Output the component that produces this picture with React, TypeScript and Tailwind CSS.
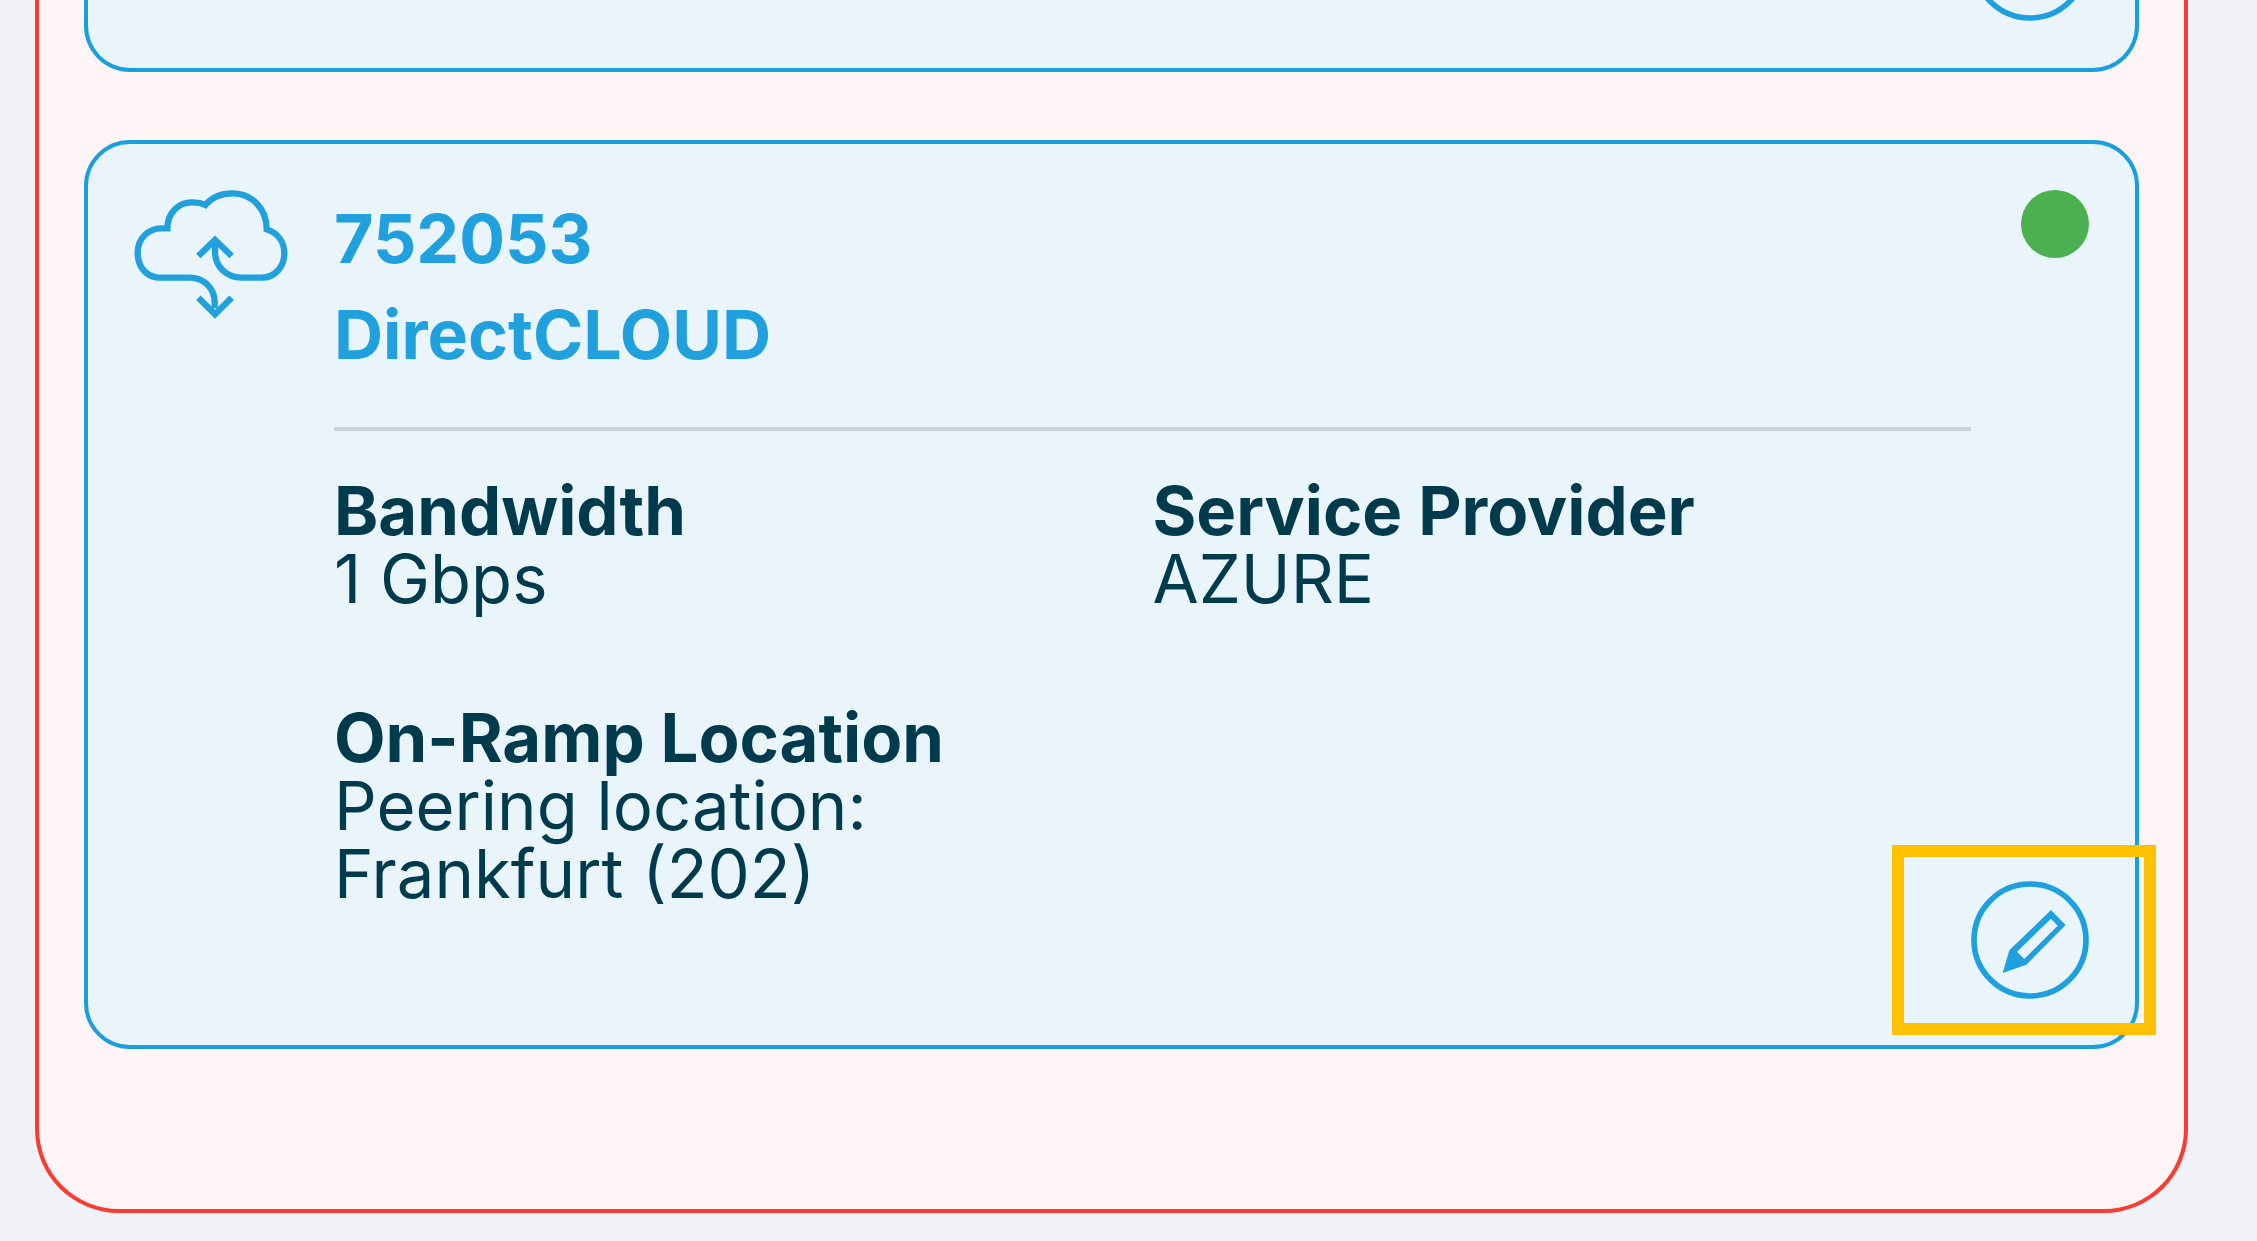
type Detail = {
  label: string;
  lines: string[];
};

const details: Detail[] = [
  { label: "Bandwidth", lines: ["1 Gbps"] },
  { label: "Service Provider", lines: ["AZURE"] },
  { label: "On-Ramp Location", lines: ["Peering location:", "Frankfurt (202)"] },
];

function CloudIcon() {
  return (
    <svg
      viewBox="42 60 462 387"
      className="w-[154px] h-[129px] shrink-0"
      fill="none"
      stroke="currentColor"
      strokeWidth="19"
      aria-hidden="true"
    >
      <path d="M284 415V394C282 352 250 323 208 323H112C76 318 53 288 53 248C53 205 85 175 125 175H142C142 130 175 97 215 97C232 97 246 100 256 105C275 82 303 70 337 70C395 70 440 115 440 178C475 190 493 218 493 250C493 290 465 323 425 323H365C320 323 285 290 285 245V210" />
      <path d="M235 258L285 210L335 258" />
      <path d="M235 383L285 433L335 383" />
    </svg>
  );
}

function EditButton() {
  return (
    <button type="button" aria-label="Edit" className="block shrink-0 cursor-pointer text-[#1ea0de]">
      <svg viewBox="302 152 354 354" className="w-[118px] h-[118px]" aria-hidden="true">
        <circle cx="479" cy="329" r="168" fill="none" stroke="currentColor" strokeWidth="17" />
        <path
          fill="currentColor"
          fillRule="evenodd"
          d="M542 239L586 284L468 403L397 428L417 360ZM542 265L440 364L462 386L562 286Z"
        />
      </svg>
    </button>
  );
}

function ServiceCard() {
  return (
    <article className="relative flex gap-[46px] rounded-[46px] border-4 border-[#1a9fde] bg-[#e9f4fb] p-[46px] text-[#20a1de]">
      <CloudIcon />

      <div className="flex-1">
        <h2 className="text-[68px] leading-[96px] font-bold">
          752053
          <br />
          DirectCLOUD
        </h2>
        <hr className="mt-[45px] mb-[46px] border-t-4 border-[#c9d2da]" />
        <dl className="grid grid-cols-2 text-[67px] leading-[68px] text-[#003b4d]">
          {details.map((d) => (
            <div key={d.label} className="pb-[91px]">
              <dt className="font-bold whitespace-nowrap">{d.label}</dt>
              {d.lines.map((line) => (
                <dd key={line}>{line}</dd>
              ))}
            </div>
          ))}
        </dl>
      </div>

      <div className="-ml-[46px] flex flex-col items-end justify-between">
        <span className="h-[68px] w-[68px] rounded-full bg-[#4caf50]" />
        <EditButton />
      </div>

      {/* Callout around the edit button */}
      <div className="pointer-events-none absolute -right-[21px] bottom-[10px] h-[190px] w-[264px] border-12 border-[#ffc000]" />
    </article>
  );
}

export default function App() {
  return (
    <main className="min-h-screen bg-[#f0f2f8] pr-[69px] pb-7 pl-[35px] font-['Inter','Liberation_Sans',sans-serif]">
      <section className="flex flex-col gap-[68px] rounded-b-[84px] border-4 border-t-0 border-[#fa3b2f] bg-[#fff5f6] px-[45px] pb-[160px]">
        {/* End of the previous card, cut off by the top of the view */}
        <div className="flex h-[72px] items-end justify-end rounded-b-[46px] border-4 border-t-0 border-[#1a9fde] bg-[#e9f4fb] px-[46px] pb-[47px]">
          <EditButton />
        </div>
        <ServiceCard />
      </section>
    </main>
  );
}
